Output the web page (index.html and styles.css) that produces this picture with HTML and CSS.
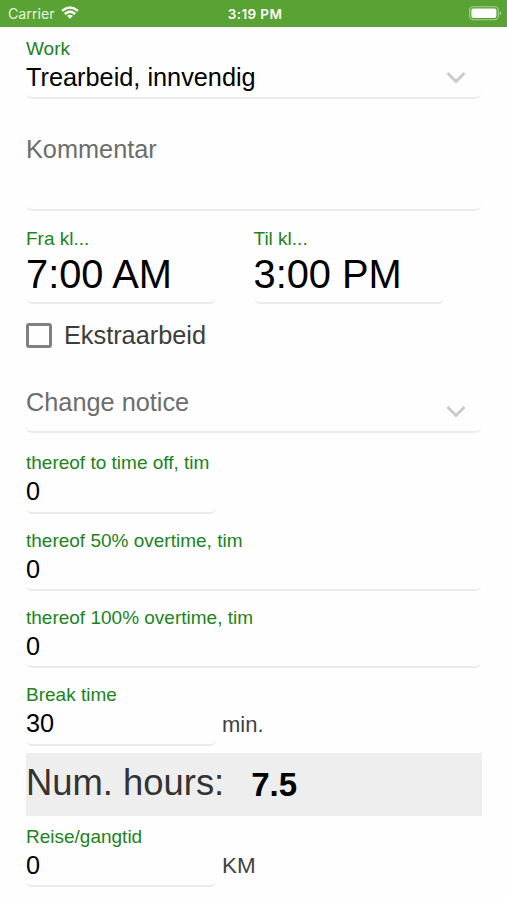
FILE: index.html
```html
<!DOCTYPE html>
<html lang="nb">
<head>
<meta charset="utf-8">
<title>Work</title>
<link rel="stylesheet" href="styles.css">
</head>
<body>
<header class="status">
  <div class="carrier"><span>Carrier</span>
    <svg class="wifi" width="18" height="14" viewBox="0 0 18 14" fill="none" stroke="#fff" stroke-width="2.4"><path d="M1 4.9Q9-1.7 17 4.9M3.8 8Q9 3.7 14.2 8"/><path d="M9 12.8 6 9.8Q9 7.6 12 9.8Z" fill="#fff" stroke="none"/></svg>
  </div>
  <div class="clock">3:19 PM</div>
  <svg class="battery" width="33" height="15" viewBox="0 0 33 15"><rect x=".7" y=".7" width="28.6" height="13" rx="3.6" fill="none" stroke="#a9d291" stroke-width="1.1"/><rect x="2.4" y="2.5" width="25" height="9.4" rx="1.8" fill="#fff"/><path d="M30.8 5v4.5q1.5-.8 1.5-2.25T30.8 5Z" fill="#a9d291"/></svg>
</header>
<main class="form">
  <div class="field work"><label class="label">Work</label><div class="value">Trearbeid, innvendig</div>
    <svg class="chevron" width="20" height="14" viewBox="0 0 20 14"><path d="M1.5 2 10 10.5 18.5 2"/></svg></div>
  <div class="field comment"><div class="value hint">Kommentar</div></div>
  <div class="times">
    <div class="field time"><label class="label">Fra kl...</label><div class="value">7:00 AM</div></div>
    <div class="field time"><label class="label">Til kl...</label><div class="value">3:00 PM</div></div>
  </div>
  <div class="check"><span class="box"></span><span>Ekstraarbeid</span></div>
  <div class="field notice"><div class="value hint">Change notice</div>
    <svg class="chevron" width="20" height="14" viewBox="0 0 20 14"><path d="M1.5 2 10 10.5 18.5 2"/></svg></div>
  <div class="field half timeoff"><label class="label">thereof to time off, tim</label><div class="value">0</div></div>
  <div class="field"><label class="label">thereof 50% overtime, tim</label><div class="value">0</div></div>
  <div class="field"><label class="label">thereof 100% overtime, tim</label><div class="value">0</div></div>
  <div class="row"><div class="field half"><label class="label">Break time</label><div class="value">30</div></div><span class="unit">min.</span></div>
  <div class="total"><span>Num. hours:</span><strong>7.5</strong></div>
  <div class="row travel"><div class="field half"><label class="label">Reise/gangtid</label><div class="value">0</div></div><span class="unit">KM</span></div>
</main>
</body>
</html>
```
FILE: styles.css
```css
* { box-sizing: border-box; }
body {
  margin: 0;
  background: #fefefe;
  color: #000;
  font-family: "Liberation Sans", Arial, sans-serif;
}
.status {
  display: grid;
  grid-template-columns: 1fr auto 1fr;
  align-items: center;
  height: 26.5px;
  padding: 0 5px 0 8px;
  background: #58a333;
  color: #fff;
  font-family: Inter, sans-serif;
  font-size: 13.5px;
  line-height: 26px;
}
.carrier { display: flex; align-items: center; gap: 6px; padding-top: 1px; color: #e6f5de; font-size: 14.2px; }
.wifi { margin-top: -2px; }
.clock { padding-top: 1px; font-weight: 600; letter-spacing: .4px; }
.battery { justify-self: end; }
.form { width: 455px; margin-left: 26px; }
.field {
  position: relative;
  display: flex;
  flex-direction: column;
  justify-content: flex-end;
  height: 77.3px;
  padding-bottom: 5.4px;
  border-bottom: 2px solid #ebebeb;
  border-radius: 0 0 6px 6px;
}
.label { margin-bottom: 2px; color: #20831c; font-size: 19px; line-height: 22px; white-space: nowrap; }
.value { font-size: 25.3px; line-height: 30px; white-space: nowrap; }
.hint { color: #6d6d6d; }
.work { height: 72.5px; padding-bottom: 4.6px; }
.chevron {
  position: absolute;
  right: 15px;
  bottom: 12px;
  fill: none;
  stroke: #c9c9c9;
  stroke-width: 2.7;
}
.comment { height: 112px; padding-bottom: 45px; }
.times { display: grid; grid-template-columns: 190px 190px; column-gap: 37.5px; }
.time { height: 93px; padding-bottom: 5px; }
.time .label { margin-bottom: 1px; }
.time .value { font-size: 39.8px; line-height: 46px; }
.check {
  display: flex;
  align-items: center;
  gap: 12.5px;
  height: 63px;
  color: #3c3c3c;
  font-size: 25.3px;
}
.box { width: 25.5px; height: 25.5px; border: 3px solid #808080; border-radius: 3px; }
.notice { height: 66px; padding-bottom: 14px; }
.timeoff { height: 80.7px; }
.half { width: 190px; }
.row { display: flex; gap: 6px; }
.unit { padding-top: 43px; color: #424242; font-size: 22px; line-height: 28px; }
.total {
  display: flex;
  align-items: baseline;
  gap: 27px;
  width: 456px;
  height: 63.5px;
  margin-top: 7px;
  background: #eee;
  color: #333;
  font-size: 36.4px;
  line-height: 60px;
}
.total strong { color: #000; font-size: 33px; transform: translateY(1px); }
.travel { margin-top: -6.4px; }
.travel .unit { padding-top: 42px; font-size: 22.4px; }
```
